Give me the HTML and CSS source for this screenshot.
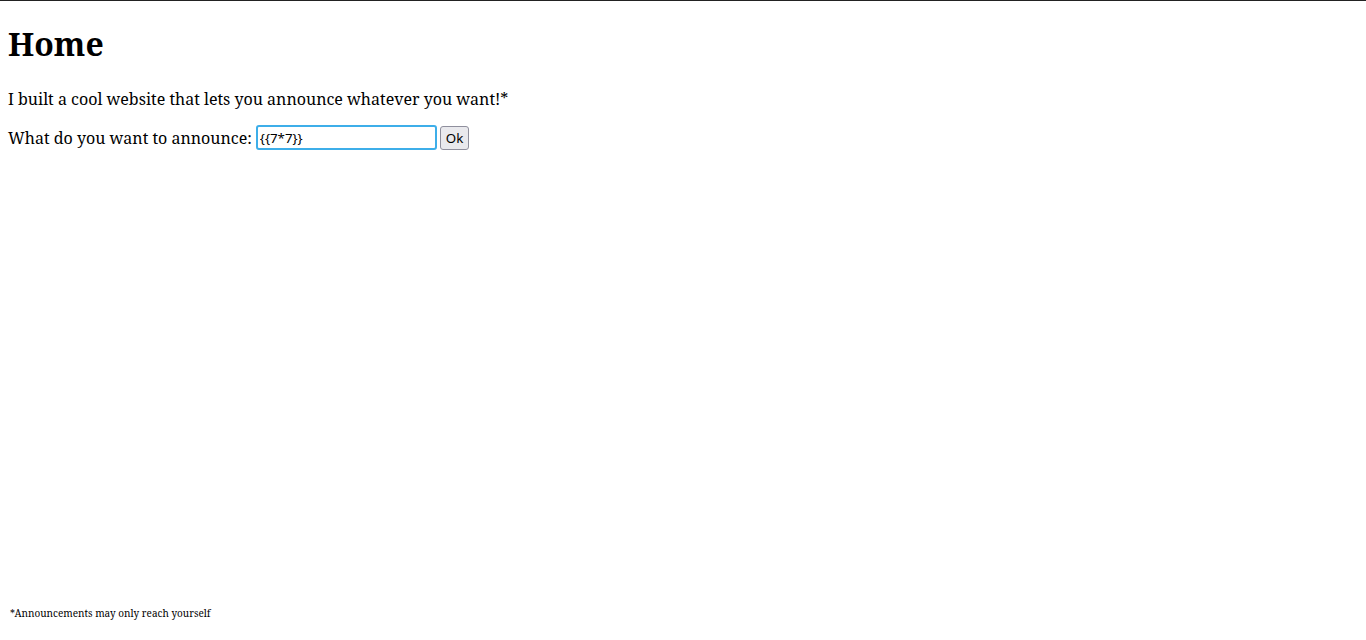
FILE: index.html
```html
<!DOCTYPE html>
<html>
<head>
<meta charset="utf-8">
<title>Home</title>
<link rel="stylesheet" href="styles.css">
</head>
<body>
<div class="page">
  <main class="content">
    <h1 class="title">Home</h1>
    <p class="intro">I built a cool website that lets you announce whatever you want!*</p>
    <form class="announce-form">
      <label class="label" for="msg">What do you want to announce:</label>
      <input class="field" id="msg" type="text" value="{{7*7}}">
      <button class="ok" type="button">Ok</button>
    </form>
  </main>
  <footer class="footnote">*Announcements may only reach yourself</footer>
</div>
</body>
</html>
```

FILE: styles.css
```css
html, body {
  margin: 0;
  padding: 0;
}
body {
  font-family: "Noto Serif", "DejaVu Serif", serif;
  color: #000;
  background: #fff;
  border-top: 1px solid #222;
}
.page {
  min-height: 639px;
  display: flex;
  flex-direction: column;
  padding: 0 8px;
  box-sizing: border-box;
}
.content {
  flex: 1;
}
.title {
  font-size: 32px;
  font-weight: bold;
  margin: 21px 0 23px;
}
.intro {
  font-size: 16px;
  margin: 0 0 15px;
}
.announce-form {
  display: flex;
  align-items: center;
  gap: 3px;
  font-size: 16px;
}
.label {
  margin-right: 1px;
}
.field {
  width: 181px;
  height: 25px;
  box-sizing: border-box;
  border: 2px solid #3daee9;
  border-radius: 3px;
  padding: 1px 2px;
  font-family: "Noto Sans", sans-serif;
  font-size: 13.33px;
  outline: none;
}
.ok {
  height: 24px;
  box-sizing: border-box;
  border: 1px solid #8f8f9d;
  border-radius: 3px;
  background: #e9e9ed;
  font-family: "Noto Sans", sans-serif;
  font-size: 13.33px;
  padding: 1px 5px;
}
.footnote {
  font-size: 10px;
  padding: 0 2px 20px;
}
```
